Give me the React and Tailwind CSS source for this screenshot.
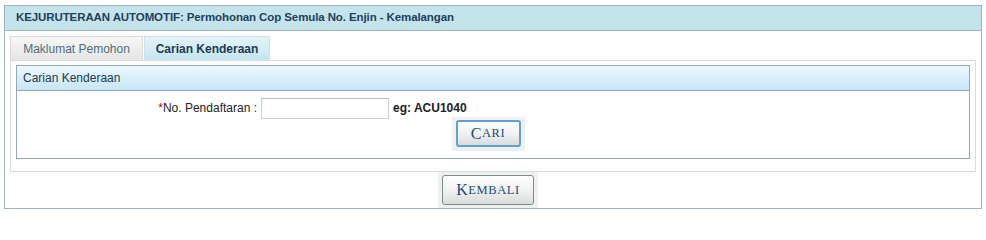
import React, { useState } from "react";

const TABS = ["Maklumat Pemohon", "Carian Kenderaan"];

function SmallCapsButton({ label, focused }) {
  return (
    <button
      className={`flex h-full w-full items-center justify-center rounded-[3px] bg-gradient-to-b from-[#ffffff] via-[#f1f2f2] to-[#d9dcdc] leading-none tracking-[0.6px] text-[#1d4b79] ${
        focused ? "border-[2px] border-[#62a2cf]" : "border border-[#7d8a8c]"
      }`}
      style={{ fontFamily: '"Liberation Serif", "DejaVu Serif", serif' }}
    >
      <span className="text-[16px]">{label[0]}</span>
      <span className="text-[12.5px] uppercase">{label.slice(1)}</span>
    </button>
  );
}

export default function App() {
  const [activeTab, setActiveTab] = useState(1);
  const [noPendaftaran, setNoPendaftaran] = useState("");

  return (
    <div
      className="bg-white pl-[4px] pt-[5px] text-[12px]"
      style={{ fontFamily: '"Liberation Sans", Arial, sans-serif' }}
    >
      <div className="flex h-[204px] w-[978px] flex-col border border-[#9fb4b9]">
        <div className="flex h-[27px] items-center border-b border-[#9fb4b9] bg-[#c3e4eb] pl-[11px] text-[11.5px] font-bold tracking-[-0.1px] text-[#1f3f60]">
          KEJURUTERAAN AUTOMOTIF: Permohonan Cop Semula No. Enjin - Kemalangan
        </div>

        <div className="flex flex-1 flex-col px-[5px] pt-[5px]">
          {/* tabs */}
          <div className="flex h-[24px] items-stretch gap-[1px]">
            {TABS.map((tab, i) =>
              i === activeTab ? (
                <div
                  key={tab}
                  onClick={() => setActiveTab(i)}
                  className="flex w-[126px] cursor-pointer items-center justify-center border border-b-0 border-[#cfe2ea] bg-gradient-to-b from-[#e4f4fa] to-[#c4e5f1] font-bold text-[#1c3b58]"
                >
                  {tab}
                </div>
              ) : (
                <div
                  key={tab}
                  onClick={() => setActiveTab(i)}
                  className="flex w-[133px] cursor-pointer items-center justify-center border border-b-0 border-[#dadada] bg-gradient-to-b from-[#f7f7f7] to-[#e6e6e6] text-[#4f6d7c]"
                >
                  {tab}
                </div>
              )
            )}
          </div>

          {/* tab panel */}
          <div className="border border-[#dcdcdc] px-[5px] pb-[12px] pt-[4px]">
            <div className="border border-[#93aab4]">
              <div className="flex h-[25px] items-center border-b border-[#93aab4] bg-gradient-to-b from-[#edf8fe] to-[#c6e6f8] pl-[6px] text-[#1d3a50]">
                Carian Kenderaan
              </div>

              <div className="mt-[6px] flex h-[22px] items-center">
                <div className="w-[244px] pr-[4px] text-right text-[#222]">
                  <span className="text-[#cc0000]">*</span>No. Pendaftaran :
                </div>
                <input
                  value={noPendaftaran}
                  onChange={(e) => setNoPendaftaran(e.target.value)}
                  className="h-[21px] w-[128px] border border-[#cfcfcf] border-t-[#b9b9b9] bg-white px-1 outline-none"
                />
                <span className="ml-[4px] font-bold text-[#222]">eg: ACU1040</span>
              </div>

              <div className="flex justify-center pb-[7px] pr-[10px]">
                <div className="-mt-[2px] h-[34px] w-[73px] bg-[#eff1f1] p-[4px] pt-[3px]">
                  <SmallCapsButton label="Cari" focused />
                </div>
              </div>
            </div>
          </div>

          <div className="flex justify-center pr-[10px]">
            <div className="h-[36px] w-[100px] bg-[#eff1f1] px-[4px] py-[3px]">
              <SmallCapsButton label="Kembali" />
            </div>
          </div>
        </div>
      </div>
    </div>
  );
}
